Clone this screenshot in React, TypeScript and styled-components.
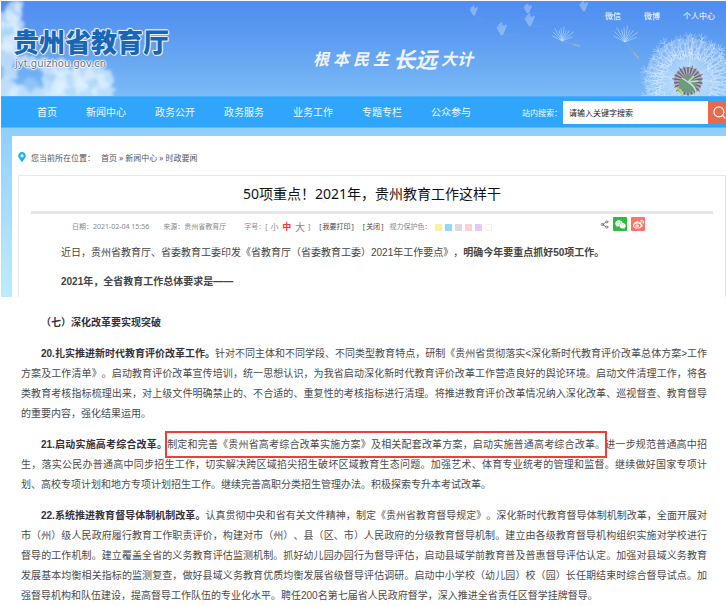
import React from "react";
import styled, { createGlobalStyle } from "styled-components";
import { FaMapMarkerAlt, FaWeibo, FaWeixin } from "react-icons/fa";
import { Search, Share2 } from "lucide-react";

const ui = `"Noto Sans", "Noto Sans CJK SC", sans-serif`;
const copy = `"Liberation Sans", "Noto Sans CJK SC", sans-serif`;

const GlobalStyle = createGlobalStyle`
  * { box-sizing: border-box; }
  body { margin: 0; background: #fff; font-family: ${ui}; overflow-x: hidden; text-spacing-trim: space-all; }
  button, input { font-family: inherit; }
  a { color: inherit; text-decoration: none; }
`;

const Site = styled.div`
  margin-left: 1px;
  border-top: 1px solid #f4f8ff;
  background: linear-gradient(180deg, #8fcffc 128px, #a5dcfb 200px, #bdebfd 296px);
`;

const Banner = styled.header`
  position: relative;
  overflow: hidden;
  display: flex;
  align-items: flex-start;
  height: 95px;
  padding: 0 10px 0 12px;
  background: linear-gradient(180deg, #4f8df0 0%, #5796f1 25%, #69a9f3 65%, #7cbaf6 100%);
`;

const Clouds = styled.svg`
  position: absolute;
  left: 0;
  top: 0;
  width: 130px;
  height: 95px;
`;

const Flowers = styled.svg`
  position: absolute;
  right: 0;
  top: 0;
  width: 260px;
  height: 95px;
`;

const Brand = styled.a`
  position: relative;
  display: flex;
  flex-direction: column;
  padding-top: 24px;
`;

const BrandName = styled.span`
  font-size: 26px;
  line-height: 34px;
  font-weight: 800;
  color: #1966b7;
  text-shadow: 1px 0 #e4f0fc, -1px 0 #e4f0fc, 0 1px #e4f0fc, 0 -1px #e4f0fc,
    1px 1px 1px #e4f0fc, -1px -1px 1px #e4f0fc, 2px 2px 2px #7d9cc4;
`;

const BrandUrl = styled.span`
  font: 10px/10px "DejaVu Sans", sans-serif;
  color: #6d7987;
  padding-left: 2px;
  text-shadow: 1px 0 1px #fff, -1px 0 1px #fff, 0 1px 1px #fff, 0 -1px 1px #fff;
`;

const Slogan = styled.p`
  position: relative;
  display: flex;
  align-items: center;
  gap: 4px;
  margin: 40px 0 0 144px;
  height: 34px;
  font-family: "Noto Sans CJK SC", sans-serif;
  font-style: italic;
  font-weight: 700;
  font-size: 16px;
  color: #f0f3f5;
`;

const SloganAccent = styled.span`
  font-size: 22px;
  line-height: 30px;
`;

const UserLinks = styled.nav`
  position: relative;
  display: flex;
  gap: 23px;
  margin-left: auto;
  padding-top: 8px;
  padding-right: 1px;
  font-size: 8px;
  line-height: 14px;
  color: #fff;
`;

const MainNav = styled.nav`
  display: flex;
  align-items: center;
  height: 32px;
  padding-left: 36px;
  overflow: hidden;
  border-top: 1px solid #4eaefa;
  border-bottom: 1px solid #5db9fb;
  background: #30a5fc;
  color: #f2f9ff;
`;

const NavLinks = styled.div`
  display: flex;
  gap: 29px;
  font-size: 10px;
  line-height: 16px;
  white-space: nowrap;
`;

const SearchForm = styled.form`
  display: flex;
  align-items: center;
  margin-left: auto;
  margin-right: -6px;
  font-size: 8px;
  white-space: nowrap;
`;

const SearchInput = styled.input`
  width: 145px;
  height: 23px;
  margin-left: 1px;
  padding: 0 6px;
  border: 0;
  border-radius: 0;
  background: #fff;
  font-size: 8px;
  color: #222;
  &::placeholder { color: #222; opacity: 1; }
`;

const SearchButton = styled.button`
  display: flex;
  align-items: center;
  width: 24px;
  height: 23px;
  padding: 0 0 0 4px;
  border: 0;
  background: #e9694a;
  color: #fff;
`;

const Panel = styled.main`
  margin: 8px 0 0 11px;
  padding-left: 6px;
  background: #fff;
`;

const Crumbs = styled.nav`
  display: flex;
  align-items: center;
  height: 39px;
  padding-top: 3px;
  font-size: 8px;
  color: #555;
`;

const Pin = styled(FaMapMarkerAlt)`
  width: 8px;
  height: 10px;
  margin-right: 5px;
  color: #14b5f0;
`;

const CrumbTrail = styled.span`
  margin-left: 6px;
  word-spacing: normal;
`;

const Article = styled.article`
  border: 1px solid #e8e8e8;
  border-bottom: 0;
  padding: 0 12px 2px;
`;

const Title = styled.h1`
  margin: 0;
  font-size: 14px;
  font-weight: 400;
  line-height: 35px;
  text-align: center;
  color: #111;
  border-bottom: 3px solid #e7e7e7;
`;

const Meta = styled.div`
  display: flex;
  align-items: center;
  height: 26px;
  padding: 0 68px 0 41px;
  font-size: 7px;
  line-height: 12px;
  color: #888;
  white-space: nowrap;
`;

const MetaItem = styled.span<{ $gap?: number }>`
  display: flex;
  align-items: center;
  margin-right: ${(p) => p.$gap ?? 9}px;
`;

const TextButton = styled.button<{ $size?: number; $active?: boolean }>`
  padding: 0;
  margin: 0 1px;
  border: 0;
  background: none;
  font-size: ${(p) => p.$size ?? 7}px;
  line-height: 12px;
  font-weight: ${(p) => (p.$active ? 700 : 400)};
  color: ${(p) => (p.$active ? "#fb3434" : "inherit")};
`;

const Actions = styled(MetaItem)`
  color: #444;
`;

const Swatches = styled.span`
  display: flex;
  gap: 3px;
  margin-left: 4px;
`;

const Swatch = styled.button<{ $color: string }>`
  width: 7px;
  height: 7px;
  padding: 0;
  border: ${(p) => (p.$color === "#fff" ? "1px solid #f2f2f2" : "0")};
  background: ${(p) => p.$color};
`;

const Share = styled.span`
  display: flex;
  align-items: center;
  gap: 4px;
  margin: -6px 0 0 auto;
  color: #666;
`;

const ShareButton = styled.button<{ $color: string }>`
  display: flex;
  align-items: center;
  justify-content: center;
  width: 14px;
  height: 14px;
  padding: 0;
  border: 0;
  border-radius: 1px;
  background: ${(p) => p.$color};
  color: #fff;
`;

const Lead = styled.div`
  display: flex;
  flex-direction: column;
  gap: 3px;
  padding-left: 30px;
  font-family: ${copy};
  font-size: 10px;
  line-height: 26px;
  color: #444;
  p { margin: 0; }
`;

const Report = styled.section`
  display: flex;
  flex-direction: column;
  gap: 11px;
  padding: 16px 19px 0 21px;
  font-family: ${copy};
  font-size: 10px;
  line-height: 20px;
  color: #4a4a4a;
  b, h2 { color: #332f3c; }
`;

const ReportHeading = styled.h2`
  margin: 0;
  padding-left: 20px;
  font-size: 10px;
`;

const Paragraph = styled.p`
  margin: 0;
  text-indent: 20px;
  text-align: justify;
`;

const Marked = styled.mark`
  padding: 6px 0;
  background: none;
  color: inherit;
  outline: 2px solid #f23b3b;
`;

const puffs = [
  [12, 10, 9], [19, 6, 5], [7, 20, 11], [15, 24, 8], [3, 34, 14], [13, 42, 10], [5, 54, 12],
  [20, 56, 7], [32, 62, 7], [8, 72, 7], [45, 65, 9], [59, 68, 9], [53, 81, 13], [69, 82, 15],
  [82, 75, 12], [94, 73, 10], [104, 80, 9], [101, 90, 11], [82, 92, 15], [60, 96, 14],
  [38, 96, 10], [18, 95, 11], [4, 90, 13],
];

const shades = [[6, 30, 6], [18, 47, 4], [30, 84, 7], [71, 90, 6], [91, 83, 5], [49, 76, 5], [3, 72, 5]];

function CloudArt() {
  return (
    <Clouds viewBox="0 0 130 95" aria-hidden="true">
      <defs>
        <filter id="puff" x="-20%" y="-20%" width="140%" height="140%">
          <feTurbulence type="fractalNoise" baseFrequency="0.09" numOctaves="3" seed="7" result="n" />
          <feDisplacementMap in="SourceGraphic" in2="n" scale="10" xChannelSelector="R" yChannelSelector="G" />
          <feGaussianBlur stdDeviation="1.5" />
        </filter>
      </defs>
      <g filter="url(#puff)">
        {puffs.map(([x, y, r]) => <circle key={`${x}-${y}`} cx={x} cy={y} r={r} fill="#e2f2fe" opacity="0.65" />)}
        {shades.map(([x, y, r]) => <circle key={`${x}-${y}`} cx={x} cy={y} r={r} fill="#9fd0f6" opacity="0.6" />)}
      </g>
    </Clouds>
  );
}

function Seed({ x, y, size, angle, faint }: { x: number; y: number; size: number; angle: number; faint?: boolean }) {
  const rays = [-62, -45, -30, -16, -4, 9, 22, 36, 52, 68];
  const shown = faint ? rays.slice(2, 7) : rays;
  return (
    <g transform={`translate(${x} ${y})`} opacity={faint ? 0.35 : 0.85}>
      {shown.map((a, i) => {
        const t = (a * Math.PI) / 180;
        const l = size * (0.8 + (i % 3) * 0.12);
        return <line key={a} x2={Math.sin(t) * l} y2={-Math.cos(t) * l} stroke="#e1f2ff" strokeWidth={faint ? 2 : 0.5} />;
      })}
      <g transform={`rotate(${angle})`}>
        <line x2={size * 1.2} stroke="#8fb0bd" strokeWidth="0.7" />
        {!faint && <line x1={size * 0.85} x2={size * 1.35} stroke="#a5b8a0" strokeWidth="1.6" />}
      </g>
    </g>
  );
}

function FlowerArt() {
  const cx = 222;
  const cy = 80;
  return (
    <Flowers viewBox="0 0 260 95" aria-hidden="true">
      <Seed x={8} y={14} size={9} angle={30} faint />
      <Seed x={36} y={34} size={12} angle={0} faint />
      <Seed x={64} y={25} size={12} angle={0} faint />
      <Seed x={62} y={12} size={9} angle={0} faint />
      <Seed x={118} y={10} size={10} angle={35} faint />
      <Seed x={96} y={40} size={14} angle={16} />
      <Seed x={159} y={41} size={16} angle={50} />
      <circle cx={cx} cy={cy} r="43" fill="#d2e9fc" opacity="0.3" />
      {Array.from({ length: 150 }, (_, i) => {
        const t = i * 2.39996;
        const l = 22 + ((i * 37) % 23);
        const x = cx + Math.cos(t) * l;
        const y = cy + Math.sin(t) * l;
        return (
          <g key={i} stroke="#eef8ff" strokeWidth="0.5" opacity="0.7">
            <line x1={cx + Math.cos(t) * 12} y1={cy + Math.sin(t) * 12} x2={x} y2={y} />
            {[-0.9, -0.4, 0.4, 0.9].map((d) => (
              <line key={d} x1={x} y1={y} x2={x + Math.cos(t + d) * 6} y2={y + Math.sin(t + d) * 6} />
            ))}
          </g>
        );
      })}
      <circle cx={cx} cy={cy} r="14" fill="#918d9f" />
      {Array.from({ length: 44 }, (_, i) => {
        const t = (i / 44) * Math.PI * 2;
        return (
          <line key={i} x1={cx + Math.cos(t) * 7} y1={cy + Math.sin(t) * 7}
            x2={cx + Math.cos(t) * (14 + (i % 3))} y2={cy + Math.sin(t) * (14 + (i % 3))}
            stroke={i % 2 ? "#60586c" : "#bdbbc8"} strokeWidth="0.9" />
        );
      })}
      <circle cx={cx} cy={cy + 3} r="9" fill="#6f9a80" />
      <path d="M217 95 Q216 88 210 87 M222 81 Q231 86 230 95 M222 81 L216 77 M222 81 L228 75 M222 81 L232 80" fill="none" stroke="#c8dfc8" strokeWidth="1.5" />
      <path d="M211 87 Q215 89 216 95" fill="none" stroke="#b3d546" strokeWidth="1.4" />
    </Flowers>
  );
}

const navItems = ["首页", "新闻中心", "政务公开", "政务服务", "业务工作", "专题专栏", "公众参与"];
const eyeColors = [
  ["黄色", "#f8f2a0"], ["蓝色", "#96d8f7"], ["灰色", "#dcdcdc"],
  ["粉色", "#fad0da"], ["紫色", "#e5c9fb"], ["白色", "#fff"],
];

export default function App() {
  return (
    <>
      <GlobalStyle />
      <Site>
        <Banner>
          <CloudArt />
          <FlowerArt />
          <Brand href="#">
            <BrandName>贵州省教育厅</BrandName>
            <BrandUrl>jyt.guizhou.gov.cn</BrandUrl>
          </Brand>
          <Slogan>
            <span>根</span><span>本</span><span>民</span><span>生</span>
            <SloganAccent>长远</SloganAccent>
            <span>大计</span>
          </Slogan>
          <UserLinks>
            <a href="#">微信</a>
            <a href="#">微博</a>
            <a href="#">个人中心</a>
          </UserLinks>
        </Banner>
        <MainNav>
          <NavLinks>
            {navItems.map((item) => <a key={item} href="#">{item}</a>)}
          </NavLinks>
          <SearchForm onSubmit={(e) => e.preventDefault()}>
            <label htmlFor="keyword">站内搜索：</label>
            <SearchInput id="keyword" placeholder="请输入关键字搜索" />
            <SearchButton aria-label="搜索"><Search size={15} strokeWidth={2} /></SearchButton>
          </SearchForm>
        </MainNav>
        <Panel>
          <Crumbs>
            <Pin />
            <span>您当前所在位置：</span>
            <CrumbTrail><a href="#">首页</a> » <a href="#">新闻中心</a> » <a href="#">时政要闻</a></CrumbTrail>
          </Crumbs>
          <Article>
            <Title>50项重点！2021年，贵州教育工作这样干</Title>
            <Meta>
              <MetaItem $gap={14}>日期：2021-02-04 15:56</MetaItem>
              <MetaItem $gap={18}>来源：贵州省教育厅</MetaItem>
              <MetaItem>
                字号：[&nbsp;
                <TextButton $size={8}>小</TextButton>&nbsp;
                <TextButton $size={9} $active>中</TextButton>&nbsp;
                <TextButton $size={10}>大</TextButton>&nbsp;]
              </MetaItem>
              <Actions>[<TextButton>我要打印</TextButton>]</Actions>
              <Actions $gap={6}>[<TextButton>关闭</TextButton>]</Actions>
              <MetaItem>
                视力保护色：
                <Swatches>
                  {eyeColors.map(([name, color]) => <Swatch key={name} aria-label={name} $color={color} />)}
                </Swatches>
              </MetaItem>
              <Share>
                <Share2 size={9} strokeWidth={2} />
                <ShareButton $color="#2dbd3a" aria-label="微信"><FaWeixin size={11} /></ShareButton>
                <ShareButton $color="#fa7468" aria-label="微博"><FaWeibo size={11} /></ShareButton>
              </Share>
            </Meta>
            <Lead>
              <p>近日，贵州省教育厅、省委教育工委印发《省教育厅（省委教育工委）2021年工作要点》，<b>明确今年要重点抓好50项工作。</b></p>
              <p><b>2021年，全省教育工作总体要求是——</b></p>
            </Lead>
          </Article>
        </Panel>
      </Site>
      <Report>
        <ReportHeading>（七）深化改革要实现突破</ReportHeading>
        <Paragraph>
          <b>20.扎实推进新时代教育评价改革工作。</b>针对不同主体和不同学段、不同类型教育特点，研制《贵州省贯彻落实&lt;深化新时代教育评价改革总体方案&gt;工作方案及工作清单》。启动教育评价改革宣传培训，统一思想认识，为我省启动深化新时代教育评价改革工作营造良好的舆论环境。启动文件清理工作，将各类教育考核指标梳理出来，对上级文件明确禁止的、不合适的、重复性的考核指标进行清理。将推进教育评价改革情况纳入深化改革、巡视督查、教育督导的重要内容，强化结果运用。
        </Paragraph>
        <Paragraph>
          <b>21.启动实施高考综合改革。</b><Marked>制定和完善《贵州省高考综合改革实施方案》及相关配套改革方案，启动实施普通高考综合改革。</Marked>进一步规范普通高中招生，落实公民办普通高中同步招生工作，切实解决跨区域掐尖招生破坏区域教育生态问题。加强艺术、体育专业统考的管理和监督。继续做好国家专项计划、高校专项计划和地方专项计划招生工作。继续完善高职分类招生管理办法。积极探索专升本考试改革。
        </Paragraph>
        <Paragraph>
          <b>22.系统推进教育督导体制机制改革。</b>认真贯彻中央和省有关文件精神，制定《贵州省教育督导规定》。深化新时代教育督导体制机制改革，全面开展对市（州）级人民政府履行教育工作职责评价，构建对市（州）、县（区、市）人民政府的分级教育督导机制。建立由各级教育督导机构组织实施对学校进行督导的工作机制。建立覆盖全省的义务教育评估监测机制。抓好幼儿园办园行为督导评估，启动县域学前教育普及普惠督导评估认定。加强对县域义务教育发展基本均衡相关指标的监测复查，做好县域义务教育优质均衡发展省级督导评估调研。启动中小学校（幼儿园）校（园）长任期结束时综合督导试点。加强督导机构和队伍建设，提高督导工作队伍的专业化水平。聘任200名第七届省人民政府督学，深入推进全省责任区督学挂牌督导。
        </Paragraph>
      </Report>
    </>
  );
}
